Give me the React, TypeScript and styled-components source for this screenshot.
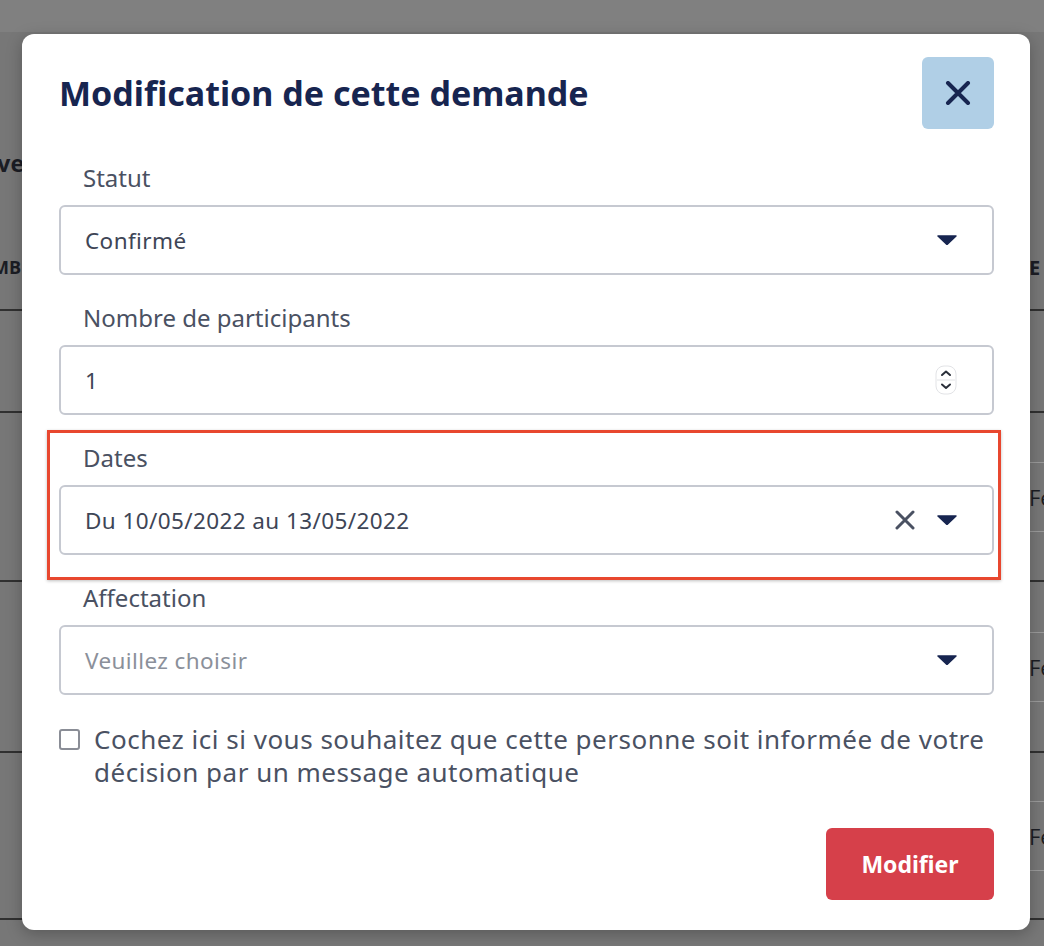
import * as React from 'react';
import styled, { createGlobalStyle } from 'styled-components';

const GlobalStyle = createGlobalStyle`
  html, body {
    margin: 0;
    padding: 0;
  }
  body {
    width: 1044px;
    height: 946px;
    overflow: hidden;
    background: #777777;
    font-family: 'Noto Sans', 'Open Sans', sans-serif;
  }
`;

const Backdrop = styled.div`
  position: relative;
  width: 1044px;
  height: 946px;
  background: #777777;
  overflow: hidden;
`;

const TopBand = styled.div`
  height: 32px;
  background: #808080;
`;

const PageHeading = styled.div`
  height: 193px;
  display: flex;
  align-items: flex-end;
  padding-bottom: 46px;
  box-sizing: border-box;
`;

const EdgeText = styled.span<{ $bold?: boolean; $size?: number }>`
  font-family: 'Open Sans', sans-serif;
  font-weight: ${(p) => (p.$bold ? 700 : 400)};
  font-size: ${(p) => p.$size ?? 20}px;
  color: #1b1d24;
  white-space: nowrap;
`;

const LeftClip = styled.div<{ $w: number }>`
  width: ${(p) => p.$w}px;
  flex: none;
  display: flex;
  justify-content: flex-end;
  overflow: hidden;
`;

const TableRow = styled.div<{ $h: number }>`
  position: relative;
  height: ${(p) => p.$h}px;
  border-bottom: 2px solid #303030;
  box-sizing: border-box;
  display: flex;
  align-items: center;
`;

const RightCell = styled.div`
  margin-left: auto;
  width: 15px;
  align-self: stretch;
  display: flex;
  align-items: center;
  overflow: hidden;
`;

const Tag = styled.div`
  height: 68px;
  width: 100%;
  border-top: 1px solid #9a9a9a;
  border-bottom: 1px solid #9a9a9a;
  display: flex;
  align-items: center;
`;

const Modal = styled.div`
  position: absolute;
  top: 34px;
  left: 22px;
  width: 1008px;
  height: 896px;
  box-sizing: border-box;
  background: #ffffff;
  border-radius: 12px;
  box-shadow: 0 4px 16px rgba(0, 0, 0, 0.25);
  padding: 23px 36px 30px 37px;
  display: flex;
  flex-direction: column;
`;

const Header = styled.div`
  display: flex;
  align-items: center;
  justify-content: space-between;
  margin-bottom: 33px;
`;

const Title = styled.h2`
  margin: 0;
  font-family: 'Noto Sans', sans-serif;
  font-weight: 700;
  font-size: 34px;
  color: #172550;
  letter-spacing: 0;
`;

const CloseButton = styled.button`
  width: 72px;
  height: 72px;
  border: none;
  border-radius: 6px;
  background: #b0cfe6;
  display: flex;
  align-items: center;
  justify-content: center;
  padding: 0;
`;

const FieldGroup = styled.div<{ $highlight?: boolean }>`
  position: relative;
  display: flex;
  flex-direction: column;
  gap: 11px;
  margin-bottom: 27px;
  ${(p) =>
    p.$highlight &&
    `
    &::after {
      content: '';
      position: absolute;
      top: -12px;
      left: -12px;
      right: -7px;
      bottom: -25px;
      border: 3px solid #e8472f;
      box-shadow: 0 1px 3px rgba(0,0,0,0.25);
      pointer-events: none;
    }
  `}
`;

const Label = styled.label`
  padding-left: 24px;
  font-size: 24px;
  line-height: 32px;
  color: #4a5162;
`;

const FieldBox = styled.div`
  height: 70px;
  box-sizing: border-box;
  border: 2px solid #c6c9d1;
  border-radius: 6px;
  display: flex;
  align-items: center;
  padding: 0 35px 0 24px;
  gap: 22px;
`;

const FieldValue = styled.span<{ $placeholder?: boolean }>`
  flex: 1;
  font-size: 22.5px;
  letter-spacing: 0.4px;
  color: ${(p) => (p.$placeholder ? '#8b909a' : '#3e4556')};
`;

const CheckRow = styled.label`
  display: flex;
  align-items: flex-start;
  gap: 14px;
  margin-top: 1px;
`;

const CheckBox = styled.span`
  flex: none;
  width: 21px;
  height: 21px;
  box-sizing: border-box;
  border: 2px solid #8a8d96;
  border-radius: 3px;
  margin-top: 6px;
`;

const CheckText = styled.span`
  font-size: 26px;
  letter-spacing: 0.5px;
  line-height: 33px;
  color: #4a5162;
`;

const Footer = styled.div`
  margin-top: auto;
  display: flex;
  justify-content: flex-end;
`;

const SubmitButton = styled.button`
  width: 168px;
  height: 72px;
  border: none;
  border-radius: 6px;
  background: #d6404a;
  color: #ffffff;
  font-family: 'Noto Sans', sans-serif;
  font-weight: 700;
  font-size: 23px;
`;

const Caret = () => (
  <svg width="20" height="10" viewBox="0 0 20 10">
    <path d="M1 1 L19 1 L10 9.5 Z" fill="#172550" stroke="#172550" strokeWidth="1.5" strokeLinejoin="round" />
  </svg>
);

const ClearIcon = () => (
  <svg width="20" height="20" viewBox="0 0 20 20">
    <path d="M2 2 L18 18 M18 2 L2 18" stroke="#4a5162" strokeWidth="3" strokeLinecap="round" />
  </svg>
);

const Spinner = () => (
  <svg width="22" height="30" viewBox="0 0 22 30">
    <rect x="1" y="1" width="20" height="28" rx="8" fill="#fff" stroke="#e2e3e6" />
    <line x1="2" y1="15" x2="20" y2="15" stroke="#e2e3e6" />
    <path d="M7 10 L11 6.5 L15 10" fill="none" stroke="#2a2f3a" strokeWidth="2" strokeLinecap="round" strokeLinejoin="round" />
    <path d="M7 19.5 L11 23 L15 19.5" fill="none" stroke="#2a2f3a" strokeWidth="2" strokeLinecap="round" strokeLinejoin="round" />
  </svg>
);

const fields = [
  { label: 'Statut', value: 'Confirmé', kind: 'select' },
  { label: 'Nombre de participants', value: '1', kind: 'number' },
  { label: 'Dates', value: 'Du 10/05/2022 au 13/05/2022', kind: 'dates' },
  { label: 'Affectation', value: 'Veuillez choisir', kind: 'placeholder' },
];

const rows = [
  { h: 86, left: 'NOMB', right: 'E', bold: true, tag: false },
  { h: 102, left: '', right: '', bold: false, tag: false },
  { h: 169, left: '', right: 'Fermé', bold: false, tag: true },
  { h: 171, left: '', right: 'Fermé', bold: false, tag: true },
  { h: 167, left: '', right: 'Fermé', bold: false, tag: true },
];

export default function App() {
  return (
    <>
      <GlobalStyle />
      <Backdrop>
        <TopBand />
        <PageHeading>
          <LeftClip $w={24}>
            <EdgeText $bold $size={23}>Réserve</EdgeText>
          </LeftClip>
        </PageHeading>
        {rows.map((r, i) => (
          <TableRow key={i} $h={r.h}>
            <LeftClip $w={21}>
              <EdgeText $bold={r.bold} $size={18}>{r.left}</EdgeText>
            </LeftClip>
            <RightCell>
              {r.tag ? (
                <Tag>
                  <EdgeText $size={22}>{r.right}</EdgeText>
                </Tag>
              ) : (
                <EdgeText $bold={r.bold} $size={20}>{r.right}</EdgeText>
              )}
            </RightCell>
          </TableRow>
        ))}

        <Modal>
          <Header>
            <Title>Modification de cette demande</Title>
            <CloseButton aria-label="Fermer">
              <svg width="26" height="24" viewBox="0 0 26 24">
                <path d="M3 2 L23 22 M23 2 L3 22" stroke="#172550" strokeWidth="4" strokeLinecap="round" />
              </svg>
            </CloseButton>
          </Header>

          {fields.map((f) => (
            <FieldGroup key={f.label} $highlight={f.kind === 'dates'}>
              <Label>{f.label}</Label>
              <FieldBox>
                <FieldValue $placeholder={f.kind === 'placeholder'}>{f.value}</FieldValue>
                {f.kind === 'dates' && <ClearIcon />}
                {f.kind === 'number' ? <Spinner /> : <Caret />}
              </FieldBox>
            </FieldGroup>
          ))}

          <CheckRow>
            <CheckBox />
            <CheckText>
              Cochez ici si vous souhaitez que cette personne soit informée de votre
              <br />
              décision par un message automatique
            </CheckText>
          </CheckRow>

          <Footer>
            <SubmitButton>Modifier</SubmitButton>
          </Footer>
        </Modal>
      </Backdrop>
    </>
  );
}
